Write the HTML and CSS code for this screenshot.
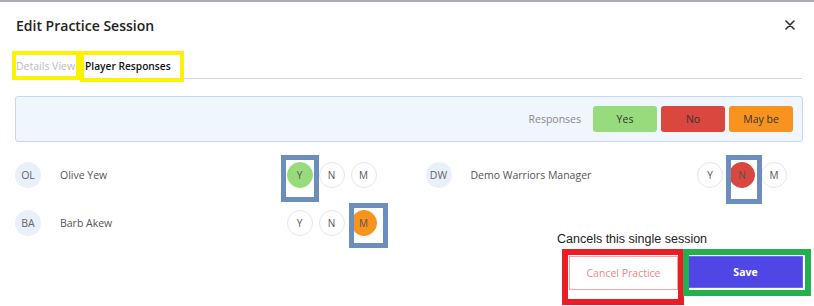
FILE: index.html
```html
<!DOCTYPE html>
<html lang="en">
<head>
    <meta charset="UTF-8">
    <meta name="viewport" content="width=device-width, initial-scale=1.0">
    <title>Edit Practice Session</title>
    <link rel="stylesheet" href="styles.css">
</head>
<body>
    <div class="modal">
        <div class="header">
            <div class="title">Edit Practice Session</div>
            <div class="close">
                <svg width="10" height="10" viewBox="0 0 10 10">
                    <path d="M1 1 L9 9 M9 1 L1 9" stroke="#2b2b2b" stroke-width="1.6" stroke-linecap="round"/>
                </svg>
            </div>
        </div>

        <div class="tabs">
            <div class="tab">Details View</div>
            <div class="tab active">Player Responses</div>
        </div>

        <div class="legend">
            <span class="legend-label">Responses</span>
            <span class="pill yes">Yes</span>
            <span class="pill no">No</span>
            <span class="pill maybe">May be</span>
        </div>

        <div class="players">
            <div class="player">
                <div class="avatar">OL</div>
                <div class="name">Olive Yew</div>
                <div class="choices">
                    <span class="choice yes">Y</span>
                    <span class="choice">N</span>
                    <span class="choice">M</span>
                </div>
            </div>
            <div class="player">
                <div class="avatar">DW</div>
                <div class="name">Demo Warriors Manager</div>
                <div class="choices">
                    <span class="choice">Y</span>
                    <span class="choice no">N</span>
                    <span class="choice">M</span>
                </div>
            </div>
            <div class="player">
                <div class="avatar">BA</div>
                <div class="name">Barb Akew</div>
                <div class="choices">
                    <span class="choice">Y</span>
                    <span class="choice">N</span>
                    <span class="choice maybe">M</span>
                </div>
            </div>
        </div>

        <div class="footer">
            <div class="actions">
                <div class="note">Cancels this single session</div>
                <div class="buttons">
                    <button class="cancel">Cancel Practice</button>
                    <button class="save">Save</button>
                </div>
            </div>
        </div>
    </div>

    <!-- review markers drawn over the screenshot -->
    <div class="mark yellow" style="left:12px;top:49px;width:68px;height:29px"></div>
    <div class="mark yellow" style="left:80px;top:49px;width:104px;height:31px"></div>
    <div class="mark blue" style="left:281px;top:153px;width:38px;height:47px"></div>
    <div class="mark blue" style="left:726px;top:153px;width:36px;height:49px"></div>
    <div class="mark blue" style="left:349px;top:201px;width:39px;height:45px"></div>
    <div class="mark red" style="left:562px;top:247px;width:122px;height:56px"></div>
    <div class="mark green" style="left:683px;top:247px;width:128px;height:47px"></div>
</body>
</html>
```

FILE: styles.css
```css
body {
    margin: 0;
    background: #fff;
    font-family: 'Open Sans', 'Noto Sans', sans-serif;
    color: #333;
    position: relative;
    height: 306px;
    overflow: hidden;
    border-top: 2px solid #a9adb3;
    box-sizing: border-box;
}

.modal {
    padding: 0 11px 0 15px;
}

.header {
    display: flex;
    justify-content: space-between;
    align-items: center;
    height: 46px;
    padding-left: 1px;
}

.title {
    font-size: 14px;
    font-weight: 600;
    color: #222;
}

.close {
    display: flex;
    margin-right: 8px;
}

.tabs {
    display: flex;
    align-items: flex-end;
    height: 31px;
    box-sizing: border-box;
    padding-bottom: 5px;
    gap: 10px;
    border-bottom: 1px solid #c9d7e8;
    margin-right: 1px;
    padding-left: 1px;
}

.tab {
    font-size: 10.5px;
    color: #bcbcbc;
}

.tab.active {
    color: #111;
    font-weight: 600;
    font-size: 10.2px;
}

.legend {
    margin-top: 17px;
    height: 44px;
    display: flex;
    justify-content: flex-end;
    align-items: center;
    gap: 4px;
    padding: 0 9px;
    background: #eff6fe;
    border: 1px solid #c6d8ee;
    border-radius: 3px;
}

.legend-label {
    font-size: 10.5px;
    color: #888;
    margin-right: 8px;
}

.pill {
    width: 64px;
    height: 26px;
    border-radius: 3px;
    display: flex;
    justify-content: center;
    align-items: center;
    font-size: 10.5px;
    color: #333;
}

.yes { background: #98db7c; }
.no { background: #d9473e; }
.maybe { background: #f7931e; }

.players {
    display: grid;
    grid-template-columns: 1fr 1fr;
    column-gap: 33px;
    row-gap: 22px;
    margin-top: 20px;
}

.player {
    display: flex;
    align-items: center;
    padding-right: 16px;
}

.avatar {
    width: 26px;
    height: 26px;
    border-radius: 50%;
    background: #e9f0f9;
    color: #666;
    font-size: 10.5px;
    display: flex;
    justify-content: center;
    align-items: center;
}

.name {
    margin-left: 19px;
    font-size: 10.5px;
    color: #555;
}

.choices {
    margin-left: auto;
    display: flex;
    gap: 6px;
}

.choice {
    width: 24px;
    height: 24px;
    border: 1px solid #e6e6e6;
    border-radius: 50%;
    display: flex;
    justify-content: center;
    align-items: center;
    font-size: 10px;
    color: #555;
    background: #fff;
}

.choice.yes { background: #98db7c; border-color: #98db7c; }
.choice.no { background: #d9473e; border-color: #d9473e; }
.choice.maybe { background: #f7931e; border-color: #f7931e; }

.footer {
    display: flex;
    justify-content: flex-end;
    margin-top: -4px;
}

.note {
    font-family: 'Liberation Sans', Arial, sans-serif;
    font-size: 12.5px;
    line-height: 15px;
    color: #222;
}

.buttons {
    display: flex;
    align-items: flex-start;
    gap: 10px;
    margin-top: 9px;
    padding-left: 12px;
}

button {
    font-family: 'Open Sans', 'Noto Sans', sans-serif;
    font-size: 10.5px;
    cursor: pointer;
}

.cancel {
    width: 109px;
    height: 34px;
    background: #fff;
    border: 1px solid #f5a3a3;
    color: #f08585;
}

.save {
    width: 115px;
    height: 32px;
    background: #4f46e5;
    border: 1px solid #6d66ee;
    color: #fff;
    font-weight: 700;
}

.mark {
    position: absolute;
    box-sizing: border-box;
    pointer-events: none;
}

.yellow { border: 4px solid #fff200; }
.blue { border: 5px solid #6c8ebf; }
.red { border: 6px solid #ed1c24; }
.green { border: 6px solid #22b14c; }
```
